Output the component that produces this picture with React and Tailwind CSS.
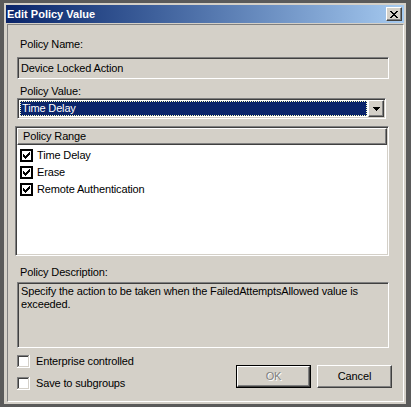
import React from "react";

const sunken =
  "border border-t-[#808080] border-l-[#808080] border-r-white border-b-white shadow-[inset_1px_1px_0_#404040,inset_-1px_-1px_0_#d4d0c8]";
const raised =
  "border border-t-white border-l-white border-r-[#404040] border-b-[#404040] shadow-[inset_-1px_-1px_0_#808080]";

function px(points) {
  return points.map(([x, y], i) => <rect key={i} x={x} y={y} width="1" height="1" />);
}

const checkPts = [
  [6, 0],
  [5, 1], [6, 1],
  [0, 2], [4, 2], [5, 2], [6, 2],
  [0, 3], [1, 3], [3, 3], [4, 3], [5, 3],
  [0, 4], [1, 4], [2, 4], [3, 4], [4, 4],
  [1, 5], [2, 5], [3, 5],
  [2, 6],
];

function ListCheck() {
  return (
    <svg width="13" height="13" viewBox="0 0 13 13" shapeRendering="crispEdges" className="shrink-0">
      <rect x="0" y="0" width="13" height="13" fill="#000" />
      <rect x="2" y="2" width="9" height="9" fill="#fff" />
      <g fill="#000" transform="translate(3 3)">{px(checkPts)}</g>
    </svg>
  );
}

function Check3D() {
  return (
    <svg width="13" height="13" viewBox="0 0 13 13" shapeRendering="crispEdges" className="shrink-0">
      <rect x="0" y="0" width="13" height="13" fill="#ffffff" />
      <rect x="0" y="0" width="12" height="12" fill="#808080" />
      <rect x="1" y="1" width="11" height="11" fill="#d4d0c8" />
      <rect x="1" y="1" width="10" height="10" fill="#404040" />
      <rect x="2" y="2" width="9" height="9" fill="#ffffff" />
    </svg>
  );
}

const xPts = [
  [0, 0], [1, 0], [6, 0], [7, 0],
  [1, 1], [2, 1], [5, 1], [6, 1],
  [2, 2], [3, 2], [4, 2], [5, 2],
  [3, 3], [4, 3],
  [2, 4], [3, 4], [4, 4], [5, 4],
  [1, 5], [2, 5], [5, 5], [6, 5],
  [0, 6], [1, 6], [6, 6], [7, 6],
];

export default function App() {
  return (
    <div className="w-[411px] h-[407px] bg-[#5a5a5a] pt-[3px] pl-[4px] font-['Liberation_Sans',Arial,sans-serif] text-[11px] leading-[13px] text-black tracking-[-0.15px]">
      <div className="w-[402px] h-[401px] bg-[#d4d0c8] p-[2px] flex flex-col">
        {/* Title bar */}
        <div className="h-[18px] shrink-0 flex items-center justify-between pl-[1px] pr-[2px] bg-linear-to-r from-[#0a246a] to-[#a6caf0]">
          <span className="text-white font-bold text-[11px] leading-[13px] tracking-normal">Edit Policy Value</span>
          <div className={`w-[16px] h-[14px] bg-[#d4d0c8] flex items-center justify-center ${raised}`}>
            <svg width="8" height="7" viewBox="0 0 8 7" shapeRendering="crispEdges">
              <g fill="#000">{px(xPts)}</g>
            </svg>
          </div>
        </div>
        {/* Client */}
        <div className="flex-1 pt-[1px] pl-[1px] flex flex-col">
          <div className="flex-1 border border-t-[#808080] border-l-[#808080] border-r-white border-b-white flex flex-col pl-[9px] pr-[14px]">
            <div className="mt-[13px] ml-[3px] h-[13px]">Policy Name:</div>
            <div className={`mt-[6px] h-[22px] flex items-center pl-[3px] ${sunken}`}>Device Locked Action</div>
            <div className="mt-[6px] ml-[3px] h-[13px]">Policy Value:</div>
            <div className={`h-[21px] mr-[3px] p-[1px] flex bg-white ${sunken}`}>
              <div className="flex-1 p-[1px]">
                <div className="h-full bg-[#0a246a] text-white flex items-center pl-[2px] outline outline-1 outline-dotted outline-[#ffffc0] -outline-offset-1">
                  Time Delay
                </div>
              </div>
              <div className={`w-[16px] h-full bg-[#d4d0c8] flex items-center justify-center ${raised}`}>
                <svg width="7" height="4" viewBox="0 0 7 4" shapeRendering="crispEdges">
                  <path d="M0 0h7v1H0zM1 1h5v1H1zM2 2h3v1H2zM3 3h1v1H3z" fill="#000" />
                </svg>
              </div>
            </div>
            <div className={`mt-[7px] -ml-[2px] h-[130px] bg-white p-[1px] flex flex-col ${sunken}`}>
              <div className={`h-[17px] shrink-0 bg-[#d4d0c8] flex items-center pl-[5px] ${raised}`}>Policy Range</div>
              <div className="mt-[2px] flex flex-col pl-[3px]">
                {["Time Delay", "Erase", "Remote Authentication"].map((t) => (
                  <div key={t} className="h-[17px] flex items-center gap-[4px]">
                    <ListCheck />
                    <span>{t}</span>
                  </div>
                ))}
              </div>
            </div>
            <div className="mt-[10px] ml-[3px] h-[13px]">Policy Description:</div>
            <div className={`mt-[3px] h-[66px] pl-[3px] pt-[2px] ${sunken}`}>
              Specify the action to be taken when the FailedAttemptsAllowed value is
              <br />
              exceeded.
            </div>
            <div className="mt-[7px] -mr-[3px] flex justify-between">
              <div className="flex flex-col gap-[9px]">
                <div className="h-[13px] flex items-center gap-[6px]">
                  <Check3D />
                  <span>Enterprise controlled</span>
                </div>
                <div className="h-[13px] flex items-center gap-[6px]">
                  <Check3D />
                  <span>Save to subgroups</span>
                </div>
              </div>
              <div className="mt-[10px] flex gap-[6px]">
                <div className="w-[75px] h-[23px] border border-black">
                  <div className={`w-full h-full bg-[#d4d0c8] flex items-center justify-center ${raised}`}>
                    <span className="text-[#808080] [text-shadow:1px_1px_0_#ffffff]">OK</span>
                  </div>
                </div>
                <div className={`w-[75px] h-[23px] bg-[#d4d0c8] flex items-center justify-center ${raised}`}>
                  Cancel
                </div>
              </div>
            </div>
          </div>
        </div>
      </div>
    </div>
  );
}
